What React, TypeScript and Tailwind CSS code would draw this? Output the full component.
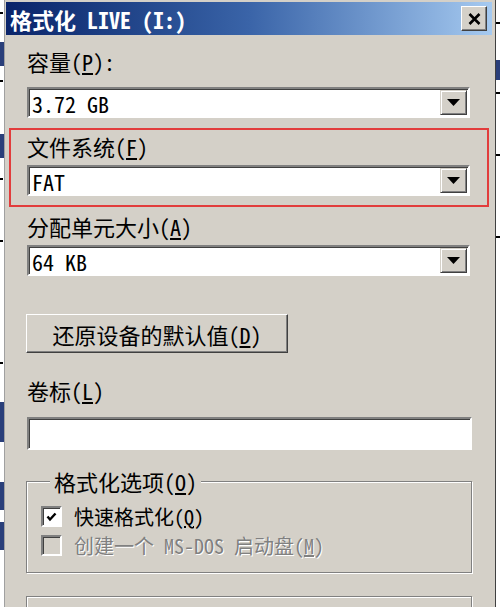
import React from 'react';

const font = "font-['Noto_Sans_Mono_CJK_SC','Liberation_Mono','Noto_Sans_CJK_SC',monospace]";

function Arrow() {
  return (
    <svg width="13" height="7" viewBox="0 0 13 7">
      <polygon points="0,0 13,0 6.5,7" fill="#000" />
    </svg>
  );
}

function Combo({ value }: { value: string }) {
  return (
    <div className="flex h-[31px] border-2 border-t-[#808080] border-l-[#808080] border-r-white border-b-white bg-white shadow-[inset_1px_1px_0_#404040]">
      <div className="flex flex-1 items-center pl-[3px] pt-[1px] text-[22px] leading-none text-black">{value}</div>
      <div className="my-[1px] mr-[1px] flex w-[27px] items-center justify-center border border-t-[#d4d0c8] border-l-[#d4d0c8] border-r-[#404040] border-b-[#404040] bg-[#d4d0c8] shadow-[inset_1px_1px_0_#fff,inset_-1px_-1px_0_#808080]">
        <Arrow />
      </div>
    </div>
  );
}

function Label({ children, className = '' }: { children: React.ReactNode; className?: string }) {
  return <div className={`h-[26px] text-[22px] leading-[26px] text-black ${className}`}>{children}</div>;
}

function Checkbox({ checked, disabled }: { checked?: boolean; disabled?: boolean }) {
  return (
    <div
      className={`flex h-[21px] w-[21px] items-center justify-center border-2 border-t-[#808080] border-l-[#808080] border-r-white border-b-white shadow-[inset_1px_1px_0_#404040] ${
        disabled ? 'bg-[#d4d0c8]' : 'bg-white'
      }`}
    >
      {checked && (
        <svg width="11" height="10" viewBox="0 0 11 10">
          <polyline points="1.5,4.5 4,7.5 9.5,1.5" fill="none" stroke="#000" strokeWidth="2.4" />
        </svg>
      )}
    </div>
  );
}

export default function App() {
  return (
    <div className={`flex h-[607px] w-[500px] overflow-hidden bg-white ${font}`}>
      {/* window behind, left edge */}
      <div className="flex w-[5px] flex-col border-r border-[#a0a0a0] bg-white">
        <div className="mt-[12px] h-[2px] w-[3px] bg-black" />
        <div className="mt-[28px] h-[24px] w-[4px] bg-[#2a3f7a]" />
        <div className="mt-[14px] h-[2px] w-[3px] bg-black" />
        <div className="mt-[52px] h-[24px] w-[4px] bg-[#2a3f7a]" />
        <div className="mt-[20px] h-[2px] w-[3px] bg-black" />
        <div className="mt-[60px] h-[2px] w-[3px] bg-black" />
        <div className="mt-[120px] h-[2px] w-[3px] bg-black" />
        <div className="mt-[38px] h-[40px] w-[4px] bg-[#2a3f7a]" />
        <div className="mt-[40px] h-[28px] w-[4px] bg-[#2a3f7a]" />
        <div className="mt-[12px] h-[28px] w-[4px] bg-[#2a3f7a]" />
      </div>

      {/* dialog */}
      <div className="flex w-[490px] flex-col bg-[#d4d0c8]">
        <div className="pl-[1px] pr-[3px] pt-[2px]">
          <div className="flex h-[33px] items-center bg-linear-to-r from-[#0a246a] via-[#3a64a8] to-[#a6caf0] pl-[4px] pr-[5px]">
            <span className="flex-1 text-[22px] font-bold leading-none text-white">格式化 LIVE (I:)</span>
            <div className="flex h-[25px] w-[26px] items-center justify-center border border-t-white border-l-white border-r-[#404040] border-b-[#404040] bg-[#d4d0c8] shadow-[inset_-1px_-1px_0_#808080]">
              <svg width="13" height="12" viewBox="0 0 13 12">
                <path d="M1.5 1 L11.5 11 M11.5 1 L1.5 11" stroke="#000" strokeWidth="2.6" />
              </svg>
            </div>
          </div>
        </div>

        <div className="flex flex-col pl-[22px] pr-[25px]">
          <Label className="mt-[13px]">
            容量(<u>P</u>):
          </Label>
          <div className="mt-[13px]">
            <Combo value="3.72 GB" />
          </div>

          <div className="-ml-[18px] -mr-[19px] mt-[10px] border-2 border-[#e23c3c] pb-[9px] pl-[16px] pr-[17px] pt-[3px]">
            <Label>
              文件系统(<u>F</u>)
            </Label>
            <div className="mt-[6px]">
              <Combo value="FAT" />
            </div>
          </div>

          <Label className="mt-[6px]">
            分配单元大小(<u>A</u>)
          </Label>
          <div className="mt-[6px]">
            <Combo value="64 KB" />
          </div>

          <button className="-ml-[1px] mt-[38px] flex h-[39px] w-[262px] items-center justify-center border border-t-white border-l-white border-r-[#404040] border-b-[#404040] bg-[#d4d0c8] text-[22px] leading-none text-black shadow-[inset_-1px_-1px_0_#808080]">
            还原设备的默认值(<u>D</u>)
          </button>

          <Label className="mt-[24px]">
            卷标(<u>L</u>)
          </Label>
          <div className="-mr-[2px] mt-[14px] h-[33px] border-2 border-t-[#808080] border-l-[#808080] border-r-white border-b-white bg-white shadow-[inset_1px_1px_0_#404040]" />

          <fieldset className="-ml-[1px] -mr-[2px] mt-[20px] border border-[#808080] pb-[12px] pl-[14px] shadow-[inset_1px_1px_0_#fff,1px_1px_0_#fff]">
            <legend className="ml-[9px] bg-[#d4d0c8] px-[4px] text-[22px] leading-[22px] text-black">
              格式化选项(<u>O</u>)
            </legend>
            <div className="mt-[10px] flex h-[29px] items-center gap-[12px]">
              <Checkbox checked />
              <span className="text-[20px] leading-[20px] text-black">
                快速格式化(<u>Q</u>)
              </span>
            </div>
            <div className="flex h-[29px] items-center gap-[12px]">
              <Checkbox disabled />
              <span className="text-[20px] leading-[20px] text-[#808080] [text-shadow:1px_1px_0_#fff]">
                创建一个 MS-DOS 启动盘(<u>M</u>)
              </span>
            </div>
          </fieldset>

          <div className="-ml-[1px] -mr-[2px] mt-[23px] h-[30px] border border-[#808080] shadow-[inset_1px_1px_0_#fff,1px_1px_0_#fff]" />
        </div>
      </div>

      {/* window behind, right edge */}
      <div className="flex w-[5px] flex-col border-l border-[#404040] bg-white">
        <div className="mt-[22px] h-[2px] w-[4px] bg-black" />
        <div className="mt-[36px] h-[20px] w-[4px] bg-[#2a3f7a]" />
        <div className="mt-[12px] h-[2px] w-[4px] bg-black" />
        <div className="mt-[60px] h-[2px] w-[4px] bg-black" />
        <div className="mt-[80px] h-[2px] w-[4px] bg-black" />
      </div>
    </div>
  );
}
